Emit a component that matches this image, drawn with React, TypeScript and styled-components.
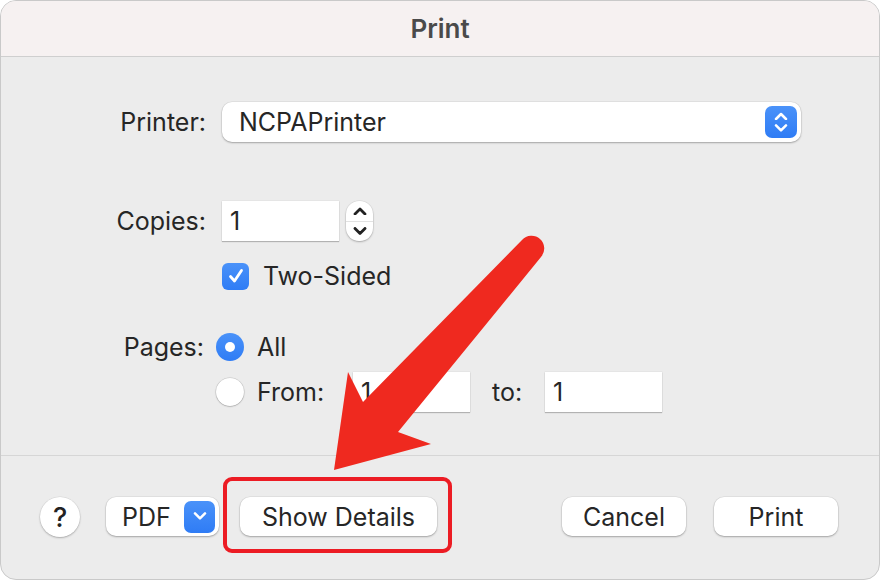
import React, { FC } from "react";
import styled, { createGlobalStyle } from "styled-components";

const GlobalStyle = createGlobalStyle`
  html, body {
    margin: 0;
    padding: 0;
    background: #ffffff;
  }
  body {
    font-family: Inter, "Open Sans", "Liberation Sans", sans-serif;
    color: #262626;
  }
`;

const Window = styled.div`
  position: relative;
  width: 880px;
  height: 580px;
  box-sizing: border-box;
  border: 1px solid #c9c9c9;
  border-radius: 16px;
  overflow: hidden;
  background: #ececec;
  display: flex;
  flex-direction: column;
`;

const TitleBar = styled.div`
  height: 54px;
  flex: none;
  display: flex;
  align-items: center;
  justify-content: center;
  padding-bottom: 1px;
  background: #f6f1f1;
  border-bottom: 1px solid #cfcfcf;
  font-size: 26px;
  font-weight: 600;
  color: #4a4a4a;
`;

const Body = styled.div`
  flex: none;
  height: 398px;
  box-sizing: border-box;
  padding-top: 45px;
  display: flex;
  flex-direction: column;
`;

const Row = styled.div<{ top: number; h: number }>`
  display: flex;
  align-items: center;
  height: ${(p) => p.h}px;
  margin-top: ${(p) => p.top}px;
`;

const Label = styled.div<{ w?: number }>`
  width: ${(p) => p.w ?? 205}px;
  flex: none;
  text-align: right;
  font-size: 25px;
`;

const Text = styled.span<{ left?: number; w?: number }>`
  font-size: 25px;
  margin-left: ${(p) => p.left ?? 0}px;
  ${(p) => (p.w ? `width: ${p.w}px; flex: none;` : "")}
`;

const Popup = styled.div`
  margin-left: 16px;
  width: 579px;
  height: 40px;
  box-sizing: border-box;
  background: #fff;
  border-radius: 10px;
  box-shadow: 0 1px 2px rgba(0, 0, 0, 0.28), 0 0 0 0.5px rgba(0, 0, 0, 0.08);
  display: flex;
  align-items: center;
  justify-content: space-between;
  padding: 0 4px 0 17px;
  font-size: 25px;
`;

const BlueKnob = styled.div<{ w: number }>`
  width: ${(p) => p.w}px;
  height: 32px;
  border-radius: 7px;
  background: linear-gradient(#4a92f9, #2f7cf5);
  display: flex;
  align-items: center;
  justify-content: center;
  flex: none;
`;

const KnobArrows = styled.div`
  display: flex;
  flex-direction: column;
  gap: 4px;
`;

const Field = styled.div<{ left: number; w: number }>`
  margin-left: ${(p) => p.left}px;
  width: ${(p) => p.w}px;
  height: 40px;
  box-sizing: border-box;
  background: #fff;
  box-shadow: 0 1px 1px rgba(0, 0, 0, 0.22), 0 0 0 0.5px rgba(0, 0, 0, 0.06);
  padding-left: 8px;
  display: flex;
  align-items: center;
  font-size: 25px;
  flex: none;
`;

const Stepper = styled.div`
  margin-left: 7px;
  width: 27px;
  height: 40px;
  border-radius: 13px;
  background: #fff;
  box-shadow: 0 1px 2px rgba(0, 0, 0, 0.25), 0 0 0 0.5px rgba(0, 0, 0, 0.08);
  display: flex;
  flex-direction: column;
  overflow: hidden;
`;

const StepHalf = styled.div<{ divider?: boolean }>`
  flex: 1;
  display: flex;
  align-items: center;
  justify-content: center;
  border-top: ${(p) => (p.divider ? "1px solid #e2e2e2" : "none")};
`;

const Checkbox = styled.div`
  margin-left: 16px;
  width: 27px;
  height: 27px;
  border-radius: 6px;
  background: linear-gradient(#4a92f9, #2f7cf5);
  display: flex;
  align-items: center;
  justify-content: center;
  flex: none;
`;

const Radio = styled.div<{ on?: boolean }>`
  margin-left: 12px;
  width: 28px;
  height: 28px;
  box-sizing: border-box;
  border-radius: 50%;
  flex: none;
  display: flex;
  align-items: center;
  justify-content: center;
  background: ${(p) => (p.on ? "linear-gradient(#4a92f9, #2f7cf5)" : "#fff")};
  box-shadow: ${(p) =>
    p.on
      ? "none"
      : "0 0.5px 1.5px rgba(0,0,0,0.3), 0 0 0 0.5px rgba(0,0,0,0.12)"};
`;

const Dot = styled.div`
  width: 10px;
  height: 10px;
  border-radius: 50%;
  background: #fff;
`;

const Footer = styled.div`
  flex: 1;
  border-top: 1px solid #d6d6d6;
  display: flex;
  align-items: flex-start;
  padding: 41px 41px 0 39px;
`;

const HelpButton = styled.div`
  width: 40px;
  height: 40px;
  border-radius: 50%;
  background: #fff;
  box-shadow: 0 1px 2px rgba(0, 0, 0, 0.25), 0 0 0 0.5px rgba(0, 0, 0, 0.08);
  display: flex;
  align-items: center;
  justify-content: center;
  font-size: 27px;
  font-weight: 500;
  color: #222;
`;

const Button = styled.div<{ w: number; left: number }>`
  margin-left: ${(p) => p.left}px;
  width: ${(p) => p.w}px;
  height: 39px;
  box-sizing: border-box;
  border-radius: 10px;
  background: #fff;
  box-shadow: 0 1px 2px rgba(0, 0, 0, 0.28), 0 0 0 0.5px rgba(0, 0, 0, 0.08);
  display: flex;
  align-items: center;
  justify-content: center;
  font-size: 25px;
  color: #262626;
  flex: none;
`;

const PdfButton = styled(Button)`
  justify-content: space-between;
  padding: 0 4px 0 16px;
`;

const Spacer = styled.div`
  flex: 1;
`;

const Highlight = styled.div`
  position: absolute;
  left: 222px;
  top: 476px;
  width: 229px;
  height: 76px;
  box-sizing: border-box;
  border: 4px solid #ec1c24;
  border-radius: 9px;
  pointer-events: none;
`;

const ArrowLayer = styled.svg`
  position: absolute;
  left: 0;
  top: 0;
  pointer-events: none;
`;

const Chevron: FC<{ dir: "up" | "down"; color: string; size?: number; sw?: number }> = ({
  dir,
  color,
  size = 14,
  sw = 2.5,
}) => (
  <svg width={size} height={size * 0.6} viewBox="0 0 14 8.4">
    <path
      d={dir === "up" ? "M2 7 L7 2 L12 7" : "M2 1.4 L7 6.4 L12 1.4"}
      fill="none"
      stroke={color}
      strokeWidth={sw}
      strokeLinecap="round"
      strokeLinejoin="round"
    />
  </svg>
);

export default function App() {
  return (
    <>
      <GlobalStyle />
      <Window>
        <TitleBar>Print</TitleBar>
        <Body>
          <Row top={0} h={40}>
            <Label>Printer:</Label>
            <Popup>
              <span>NCPAPrinter</span>
              <BlueKnob w={32}>
                <KnobArrows>
                  <Chevron dir="up" color="#fff" />
                  <Chevron dir="down" color="#fff" />
                </KnobArrows>
              </BlueKnob>
            </Popup>
          </Row>
          <Row top={59} h={40}>
            <Label>Copies:</Label>
            <Field left={16} w={117}>1</Field>
            <Stepper>
              <StepHalf>
                <Chevron dir="up" color="#222" size={14} sw={2.8} />
              </StepHalf>
              <StepHalf divider>
                <Chevron dir="down" color="#222" size={14} sw={2.8} />
              </StepHalf>
            </Stepper>
          </Row>
          <Row top={21} h={28}>
            <Label />
            <Checkbox>
              <svg width="18" height="18" viewBox="0 0 18 18">
                <path
                  d="M3.5 9.5 L7.5 14 L14.5 3.5"
                  fill="none"
                  stroke="#fff"
                  strokeWidth="2.8"
                  strokeLinecap="round"
                  strokeLinejoin="round"
                />
              </svg>
            </Checkbox>
            <Text left={14}>Two-Sided</Text>
          </Row>
          <Row top={43} h={28}>
            <Label w={203}>Pages:</Label>
            <Radio on>
              <Dot />
            </Radio>
            <Text left={13}>All</Text>
          </Row>
          <Row top={11} h={40}>
            <Label w={203} />
            <Radio />
            <Text left={13} w={94}>From:</Text>
            <Field left={2} w={117}>1</Field>
            <Text left={22} w={53}>to:</Text>
            <Field left={0} w={117}>1</Field>
          </Row>
        </Body>
        <Footer>
          <HelpButton>?</HelpButton>
          <PdfButton left={26} w={113}>
            <span>PDF</span>
            <BlueKnob w={31}>
              <Chevron dir="down" color="#fff" />
            </BlueKnob>
          </PdfButton>
          <Button left={21} w={197}>Show Details</Button>
          <Spacer />
          <Button left={0} w={124}>Cancel</Button>
          <Button left={28} w={124}>Print</Button>
        </Footer>
        <Highlight />
        <ArrowLayer width="880" height="580" viewBox="0 0 880 580">
          <path
            d="M521 239 L362 401 L347 371 L333 469 L430 443 L397 431 L540 256 A12 12 0 0 0 521 239 Z"
            fill="#ef291f"
          />
        </ArrowLayer>
      </Window>
    </>
  );
}
